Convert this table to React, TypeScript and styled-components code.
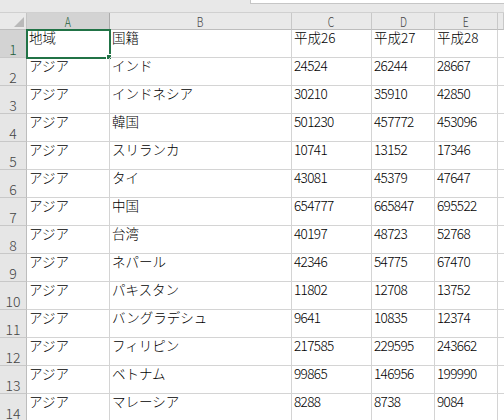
import React from "react";
import styled, { createGlobalStyle, css } from "styled-components";

const Global = createGlobalStyle`
  html, body { margin: 0; padding: 0; background: #ffffff; overflow: hidden; }
  body { width: 504px; height: 420px; }
  * { box-sizing: border-box; }
`;

const FONT = `"Noto Sans CJK JP", "DejaVu Sans", sans-serif`;

const Sheet = styled.div`
  width: 504px;
  height: 420px;
  overflow: hidden;
  display: flex;
  flex-direction: column;
  font-family: ${FONT};
  background: #ffffff;
`;

const TopStrip = styled.div`
  height: 13px;
  flex: none;
  display: flex;
  align-items: flex-start;
  background: #e8e8e8;
  border-bottom: 1px solid #d0d0d0;
`;

const FormulaEdge = styled.div`
  margin-left: 250px;
  flex: 1;
  height: 4px;
  background: #ffffff;
  border-left: 1px solid #c6c6c6;
  border-bottom: 1px solid #c6c6c6;
`;

const Grid = styled.div`
  display: grid;
  grid-template-columns: 27px 83px 182px 80px 63px 63px 1fr;
  grid-template-rows: 17px repeat(14, 28px);
`;

const Corner = styled.div`
  background: #e9e9e9;
  border-right: 1px solid #c4c4c4;
  border-bottom: 1px solid #bdbdbd;
  display: flex;
  justify-content: flex-end;
  align-items: flex-end;
  padding: 0 2px 2px 0;
`;

const Triangle = styled.div`
  width: 0;
  height: 0;
  border-left: 10px solid transparent;
  border-bottom: 10px solid #b9b9b9;
`;

const ColHead = styled.div<{ $sel?: boolean }>`
  background: ${(p) => (p.$sel ? "#d3d3d3" : "#e9e9e9")};
  border-right: 1px solid ${(p) => (p.$sel ? "#ababab" : "#c8c8c8")};
  border-bottom: 1px solid ${(p) => (p.$sel ? "#217346" : "#bdbdbd")};
  color: ${(p) => (p.$sel ? "#1e5e3a" : "#444444")};
  font-size: 13px;
  font-weight: 300;
  line-height: 14px;
  display: flex;
  justify-content: center;
  align-items: center;
  padding-top: 2px;
  overflow: hidden;
`;

const Letter = styled.span`
  display: inline-block;
  transform: scaleX(0.8);
`;

const RowHead = styled.div<{ $sel?: boolean }>`
  background: ${(p) => (p.$sel ? "#d3d3d3" : "#e6e6e6")};
  border-right: 1px solid ${(p) => (p.$sel ? "#217346" : "#bdbdbd")};
  border-bottom: 1px solid #c8c8c8;
  color: ${(p) => (p.$sel ? "#1e5e3a" : "#444444")};
  font-size: 14px;
  font-weight: 300;
  line-height: 14px;
  display: flex;
  justify-content: center;
  align-items: flex-end;
  padding-bottom: 1px;
  overflow: hidden;
`;

const Cell = styled.div<{ $edge?: boolean; $num?: boolean }>`
  position: relative;
  border-right: 1px solid #d4d4d4;
  border-bottom: 1px solid #d4d4d4;
  color: #000000;
  font-size: 13.5px;
  font-weight: 300;
  line-height: 14px;
  padding: 0 0 0 2px;
  white-space: nowrap;
  letter-spacing: ${(p) => (p.$num ? "-0.6px" : "0")};
  ${(p) =>
    p.$edge &&
    css`
      border-right: none;
    `}
`;

const Selection = styled.div`
  position: absolute;
  top: -1px;
  left: -1px;
  right: -2px;
  bottom: -2px;
  border: 2px solid #217346;
  pointer-events: none;
`;

const Handle = styled.div`
  position: absolute;
  right: -3px;
  bottom: -3px;
  width: 6px;
  height: 6px;
  background: #217346;
  border: 1px solid #ffffff;
  pointer-events: none;
`;

const cols = ["A", "B", "C", "D", "E"];

const rows: string[][] = [
  ["地域", "国籍", "平成26", "平成27", "平成28"],
  ["アジア", "インド", "24524", "26244", "28667"],
  ["アジア", "インドネシア", "30210", "35910", "42850"],
  ["アジア", "韓国", "501230", "457772", "453096"],
  ["アジア", "スリランカ", "10741", "13152", "17346"],
  ["アジア", "タイ", "43081", "45379", "47647"],
  ["アジア", "中国", "654777", "665847", "695522"],
  ["アジア", "台湾", "40197", "48723", "52768"],
  ["アジア", "ネパール", "42346", "54775", "67470"],
  ["アジア", "パキスタン", "11802", "12708", "13752"],
  ["アジア", "バングラデシュ", "9641", "10835", "12374"],
  ["アジア", "フィリピン", "217585", "229595", "243662"],
  ["アジア", "ベトナム", "99865", "146956", "199990"],
  ["アジア", "マレーシア", "8288", "8738", "9084"],
];

export default function App() {
  return (
    <>
      <Global />
      <Sheet>
        <TopStrip>
          <FormulaEdge />
        </TopStrip>
        <Grid>
          <Corner>
            <Triangle />
          </Corner>
          {cols.map((c) => (
            <ColHead key={c} $sel={c === "A"}>
              <Letter>{c}</Letter>
            </ColHead>
          ))}
          <ColHead />
          {rows.map((r, i) => (
            <React.Fragment key={i}>
              <RowHead $sel={i === 0}>{i + 1}</RowHead>
              {r.map((v, j) => (
                <Cell key={j} $num={/^\d+$/.test(v)}>
                  {v}
                  {i === 0 && j === 0 && (
                    <>
                      <Selection />
                      <Handle />
                    </>
                  )}
                </Cell>
              ))}
              <Cell $edge />
            </React.Fragment>
          ))}
        </Grid>
      </Sheet>
    </>
  );
}
